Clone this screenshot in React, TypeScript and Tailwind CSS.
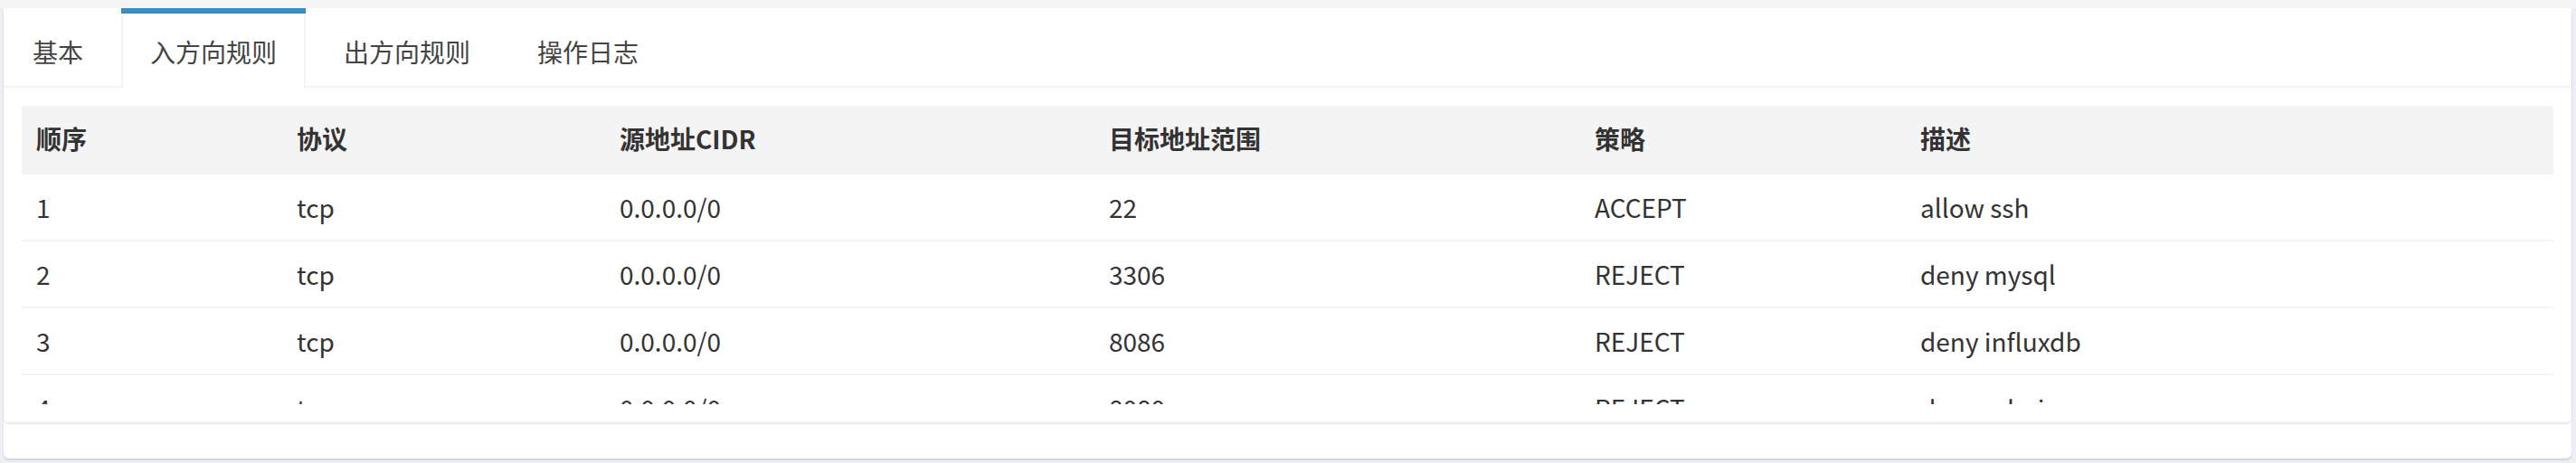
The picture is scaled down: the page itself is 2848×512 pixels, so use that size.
import React from 'react';

const tabs = ['基本', '入方向规则', '出方向规则', '操作日志'];
const activeTab = 1;

const columns = [
  { label: '顺序', width: 'w-[288px]' },
  { label: '协议', width: 'w-[357px]' },
  { label: '源地址CIDR', width: 'w-[541px]' },
  { label: '目标地址范围', width: 'w-[537px]' },
  { label: '策略', width: 'w-[360px]' },
  { label: '描述', width: 'w-auto' },
];

const rules = [
  ['1', 'tcp', '0.0.0.0/0', '22', 'ACCEPT', 'allow ssh'],
  ['2', 'tcp', '0.0.0.0/0', '3306', 'REJECT', 'deny mysql'],
  ['3', 'tcp', '0.0.0.0/0', '8086', 'REJECT', 'deny influxdb'],
  ['4', 'tcp', '0.0.0.0/0', '8080', 'REJECT', 'deny admin'],
];

const App = () => {
  return (
    <div className="min-h-screen bg-[#ecf0f5] font-['Noto_Sans_CJK_SC',sans-serif] text-[28px]">
      <div className="h-[9px] bg-[#f5f5f5]" />
      <div className="ml-[4px] mr-[5px] rounded-b-[6px] bg-white pb-[40px] shadow-[0_2px_2px_rgba(0,0,0,0.12)]">
        <div className="rounded-[6px] bg-white shadow-[0_2px_2px_rgba(0,0,0,0.1)]">
          {/* tabs */}
          <ul className="flex items-start border-b-2 border-[#f4f4f4]">
            {tabs.map((tab, i) =>
              i === activeTab ? (
                <li key={tab} className="mr-[10px] -mb-[2px] border-t-[6px] border-[#3c8dbc] bg-white">
                  <a className="block border-x-2 border-[#f4f4f4] px-[30px] pt-[22px] pb-[20px] leading-[40px] text-[#444]">
                    {tab}
                  </a>
                </li>
              ) : (
                <li key={tab} className="mr-[10px] border-t-[6px] border-transparent">
                  <a className="block border-x-2 border-transparent px-[30px] pt-[22px] pb-[18px] leading-[40px] text-[#444]">
                    {tab}
                  </a>
                </li>
              )
            )}
          </ul>

          {/* tab content */}
          <div className="p-[20px]">
            <div className="h-[330px] overflow-hidden">
              <table className="w-full table-fixed border-collapse text-left text-[#333]">
                <colgroup>
                  {columns.map((c) => (
                    <col key={c.label} className={c.width} />
                  ))}
                </colgroup>
                <thead className="bg-[#f4f4f4]">
                  <tr>
                    {columns.map((c) => (
                      <th key={c.label} className="border-b-4 border-[#f4f4f4] px-[16px] py-[16px] font-bold leading-[40px]">
                        {c.label}
                      </th>
                    ))}
                  </tr>
                </thead>
                <tbody>
                  {rules.map((row, r) => (
                    <tr key={row[0]} className={r === 0 ? '' : 'border-t-2 border-[#f4f4f4]'}>
                      {row.map((cell, c) => (
                        <td key={c} className="px-[16px] py-[16px] leading-[40px]">
                          {cell}
                        </td>
                      ))}
                    </tr>
                  ))}
                </tbody>
              </table>
            </div>
          </div>
        </div>
      </div>
    </div>
  );
};

export default App;
